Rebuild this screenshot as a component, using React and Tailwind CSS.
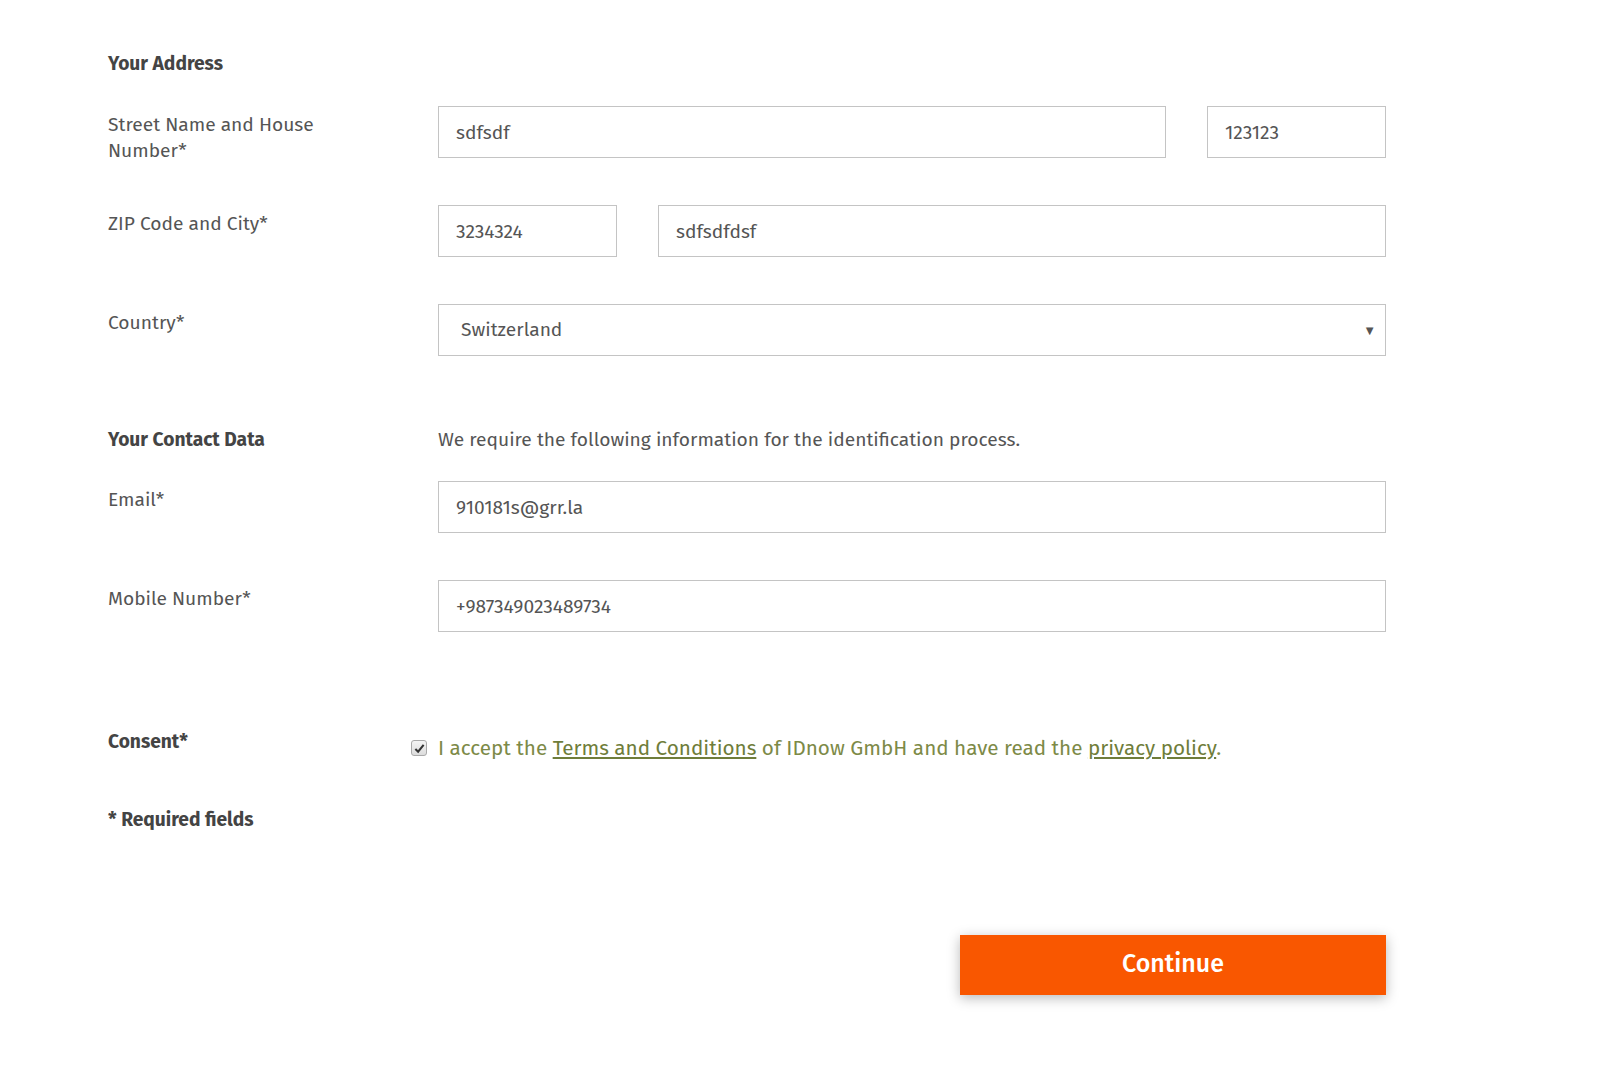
import { useState } from 'react';

const font = { fontFamily: '"Fira Sans", "Noto Sans", "Open Sans", sans-serif' };

function Row({ label, children, className = 'mb-[47px]' }) {
  return (
    <div className={`grid h-[52px] grid-cols-[330px_948px] ${className}`}>
      <div className="mt-[6px] pr-[100px] text-[19.2px] leading-[26px] text-[#555]">{label}</div>
      <div>{children}</div>
    </div>
  );
}

function Field({ value, className = '' }) {
  return (
    <input
      defaultValue={value}
      style={font}
      className={`h-[52px] border border-[#c4c4c4] bg-white px-[17px] text-[19.2px] text-[#555] outline-none ${className}`}
    />
  );
}

export default function App() {
  const [accepted, setAccepted] = useState(true);

  return (
    <div style={font} className="min-h-[1084px] w-[1600px] bg-white pl-[108px] pt-[51px]">
      <div className="mb-[29px] text-[19.2px] font-bold leading-[26px] text-[#444]">Your Address</div>

      <Row label="Street Name and House Number*">
        <div className="flex gap-[41px]">
          <Field value="sdfsdf" className="w-[728px]" />
          <Field value="123123" className="w-[179px]" />
        </div>
      </Row>

      <Row label="ZIP Code and City*">
        <div className="flex gap-[41px]">
          <Field value="3234324" className="w-[179px]" />
          <Field value="sdfsdfdsf" className="w-[728px]" />
        </div>
      </Row>

      <Row label="Country*" className="mb-[71px]">
        <div className="relative h-[52px] w-[948px] border border-[#c4c4c4] bg-white">
          <div className="flex h-full items-center pl-[22px] text-[19.2px] text-[#555]">Switzerland</div>
          <span className="absolute right-[9px] top-[16px] text-[13px] text-[#555]">▼</span>
        </div>
      </Row>

      <div className="mb-[28px] grid grid-cols-[330px_948px] text-[19.2px] leading-[26px]">
        <div className="font-bold text-[#444]">Your Contact Data</div>
        <div className="text-[#555]">We require the following information for the identification process.</div>
      </div>

      <Row label="Email*">
        <Field value="910181s@grr.la" className="w-[948px]" />
      </Row>

      <Row label="Mobile Number*" className="mb-[97px]">
        <Field value="+987349023489734" className="w-[948px]" />
      </Row>

      <div className="mb-[46px] grid grid-cols-[330px_948px] text-[19.2px] leading-[26px]">
        <div className="font-bold text-[#444]">Consent*</div>
        <label className="relative mt-[6px] flex items-center text-[20.7px] text-[#7d8a47]">
          <span
            onClick={() => setAccepted(!accepted)}
            className="absolute left-[-27px] top-[5px] flex h-[16px] w-[16px] items-center justify-center rounded-[3px] border border-[#a9a9a9] bg-gradient-to-b from-[#f4f4f4] to-[#dcdcdc]"
          >
            {accepted && (
              <svg width="11" height="11" viewBox="0 0 12 12">
                <path d="M1.5 6.5 L4.5 9.5 L10.5 2" fill="none" stroke="#333" strokeWidth="2.2" />
              </svg>
            )}
          </span>
          <span>
            I accept the{' '}
            <a className="text-[#6f7d3a] underline underline-offset-2">Terms and Conditions</a> of IDnow GmbH and
            have read the <a className="text-[#6f7d3a] underline underline-offset-2">privacy policy</a>.
          </span>
        </label>
      </div>

      <div className="mb-[102px] text-[19.2px] font-bold leading-[26px] text-[#444]">* Required fields</div>

      <div className="flex w-[1278px] justify-end">
        <button className="h-[60px] w-[426px] bg-[#f95700] text-[25px] font-medium text-white shadow-[0_3px_12px_rgba(0,0,0,0.28)]">
          Continue
        </button>
      </div>
    </div>
  );
}
